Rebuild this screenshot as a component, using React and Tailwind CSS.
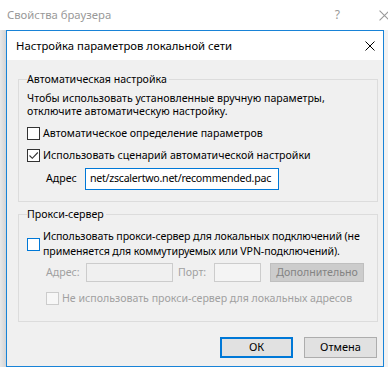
import React from 'react';

const Check = ({ state = 'normal', checked = false }) => {
    const styles = {
        normal: 'border-[#333333] bg-white',
        focus: 'border-[#0078d7] bg-white',
        disabled: 'border-[#cccccc] bg-[#f7f7f7]',
    };
    return (
        <div className={`w-[13px] h-[13px] border shrink-0 flex items-center justify-center ${styles[state]}`}>
            {checked && (
                <svg width="11" height="11" viewBox="0 0 11 11">
                    <path d="M1.5 5.5 L4.3 8.3 L9.8 2.5" fill="none" stroke="#333333" strokeWidth="1.1" />
                </svg>
            )}
        </div>
    );
};

const CloseX = ({ color = '#000', size = 10 }) => (
    <svg width={size} height={size} viewBox="0 0 10 10">
        <path d="M0.5 0.5 L9.5 9.5 M9.5 0.5 L0.5 9.5" stroke={color} strokeWidth="1" fill="none" />
    </svg>
);

export default function App() {
    return (
        <div className="w-[388px] h-[367px] overflow-hidden bg-white font-['Noto_Sans',sans-serif] text-[10.6px] text-black">
            {/* outer window title */}
            <div className="h-[30px] flex items-center pl-[7px] relative">
                <span className="text-[#999999] text-[11.3px] leading-none">Свойства браузера</span>
                <span className="ml-auto mr-[48px] text-[#999999] text-[12px] leading-none">?</span>
                <span className="absolute left-[379px] top-[10px]">
                    <CloseX color="#999999" size={11} />
                </span>
            </div>

            <div className="flex h-[337px]">
                <div className="w-[6px] bg-gradient-to-r from-[#e8e8e8] to-[#d4d4d4]" />

                {/* inner dialog */}
                <div className="w-[378px] border border-[#1883d7] flex flex-col">
                    <div className="h-[29px] bg-white flex items-center pl-[9px] pr-[8px]">
                        <span className="text-[11.3px] leading-none">Настройка параметров локальной сети</span>
                        <span className="ml-auto">
                            <CloseX />
                        </span>
                    </div>

                    <div className="flex-1 bg-[#f0f0f0] pl-[11px] pr-[5px]">
                        {/* auto config */}
                        <fieldset className="mt-[12px] border border-[#dcdcdc] pl-[8px] pr-[8px] pb-[11px]">
                            <legend className="leading-[14px] pr-[2px]">Автоматическая настройка</legend>
                            <p className="mt-[6px] leading-[13px]">
                                Чтобы использовать установленные вручную параметры,<br />
                                отключите автоматическую настройку.
                            </p>
                            <div className="mt-[9px] flex items-center gap-[3px] h-[13px]">
                                <Check />
                                <span>Автоматическое определение параметров</span>
                            </div>
                            <div className="mt-[9px] flex items-center gap-[3px] h-[13px]">
                                <Check checked />
                                <span>Использовать сценарий автоматической настройки</span>
                            </div>
                            <div className="mt-[6px] flex items-center pl-[19px]">
                                <span className="w-[39px]">Адрес</span>
                                <div className="w-[194px] h-[22px] border border-[#0078d7] bg-white flex items-center pl-[4px] overflow-hidden whitespace-nowrap tracking-[-0.25px]">
                                    net/zscalertwo.net/recommended.pac
                                </div>
                            </div>
                        </fieldset>

                        {/* proxy */}
                        <fieldset className="mt-[5px] border border-[#dcdcdc] pl-[8px] pr-[8px] pb-[16px]">
                            <legend className="leading-[14px] pr-[2px]">Прокси-сервер</legend>
                            <div className="mt-[8px] flex items-center gap-[3px]">
                                <Check state="focus" />
                                <span className="leading-[15px] whitespace-nowrap tracking-[-0.1px]">
                                    Использовать прокси-сервер для локальных подключений (не<br />
                                    применяется для коммутируемых или VPN-подключений).
                                </span>
                            </div>
                            <div className="mt-[4px] flex items-center pl-[19px] text-[#a0a0a0]">
                                <span className="w-[40px]">Адрес:</span>
                                <div className="w-[87px] h-[19px] border border-[#cccccc] bg-[#f0f0f0]" />
                                <span className="ml-[5px] w-[36px]">Порт:</span>
                                <div className="w-[47px] h-[19px] border border-[#cccccc] bg-[#f4f4f4]" />
                                <div className="ml-[9px] w-[94px] h-[19px] border border-[#bfbfbf] bg-[#cccccc] text-[#838383] flex items-center justify-center">
                                    Дополнительно
                                </div>
                            </div>
                            <div className="mt-[10px] flex items-center gap-[3px] h-[13px] pl-[19px] text-[#a0a0a0]">
                                <Check state="disabled" />
                                <span>Не использовать прокси-сервер для локальных адресов</span>
                            </div>
                        </fieldset>

                        {/* buttons */}
                        <div className="mt-[15px] flex justify-end gap-[11px] pr-[1px]">
                            <button className="w-[73px] h-[21px] border-2 border-[#0078d7] bg-[#e1e1e1] text-[11px]">ОК</button>
                            <button className="w-[73px] h-[21px] border border-[#adadad] bg-[#e1e1e1] text-[11px]">Отмена</button>
                        </div>
                    </div>
                </div>

                <div className="flex-1 bg-[#f2f2f2]" />
            </div>
        </div>
    );
}
